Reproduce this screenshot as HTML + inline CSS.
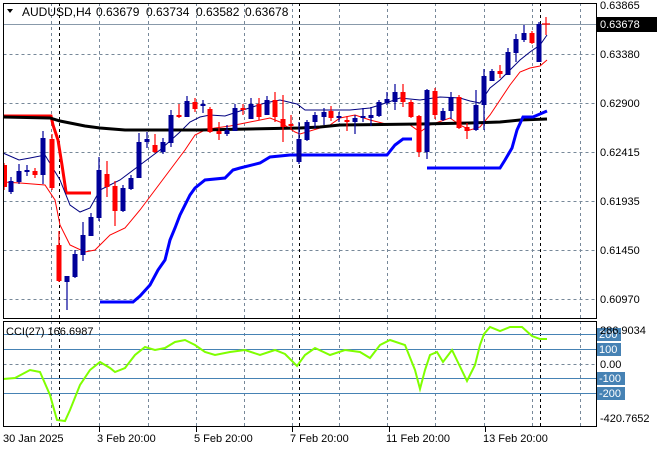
<!DOCTYPE html>
<html><head><meta charset="utf-8"><style>
html,body{margin:0;padding:0;background:#fff;}
svg{display:block;font-family:"Liberation Sans",sans-serif;font-size:11px;}
</style></head><body>
<svg width="660" height="450" viewBox="0 0 660 450" xmlns="http://www.w3.org/2000/svg">
<rect width="660" height="450" fill="#fff"/>
<g stroke="#778899" stroke-width="1" stroke-dasharray="3,3" fill="none">
<path d="M3.5 54.5H596M3.5 103.5H596M3.5 152.5H596M3.5 201.5H596M3.5 250.5H596M3.5 299.5H596"/>
<path d="M51.5 3V318M99.5 3V318M148.5 3V318M196.5 3V318M244.5 3V318M292.5 3V318M339.5 3V318M387.5 3V318M435.5 3V318M484.5 3V318M532.5 3V318M580.5 3V318"/>
<path d="M51.5 321V426M99.5 321V426M148.5 321V426M196.5 321V426M244.5 321V426M292.5 321V426M339.5 321V426M387.5 321V426M435.5 321V426M484.5 321V426M532.5 321V426M580.5 321V426"/>
<path d="M3.5 364.5H596"/>
</g>
<g stroke="#000" stroke-dasharray="3,3"><path d="M59.5 3V318M299.5 3V318M540.5 3V318M59.5 321V426M299.5 321V426M540.5 321V426"/></g>
<path d="M3 24.5H596" stroke="#8899aa"/>
<g stroke="#4682b4"><path d="M3 334.5H596M3 349.5H596M3 378.5H596M3 393.5H596"/></g>
<path d="M3 116H51L53 125L58 140L62 165L66 192L67 193H91" stroke="#f00" stroke-width="3" fill="none"/>
<path d="M3 182L20 183L45 185L55 200L60 225L70 245L85 252L95 250L110 235L125 228L140 210L155 190L170 170L185 150L195 135L205 130L215 128L230 126L250 122L270 118L280 122L295 132L300 134L330 125L340 118L355 115L370 120L390 125L410 125L420 132L430 125L450 118L460 125L470 130L480 127L490 115L500 100L510 85L520 72L530 68L540 66L547 60" stroke="#f00" stroke-width="1" fill="none"/>
<path d="M3 153L19 160L30 158L45 155L60 180L70 205L80 212L90 208L100 190L120 180L140 165L160 150L180 132L190 122L200 117L210 115L225 116L240 111L265 103L280 100L297 104L305 110L320 110L350 110L370 108L380 105L400 98L420 100L440 97L460 98L470 101L480 103L490 88L500 80L510 70L520 60L530 52L540 45L547 35" stroke="#000080" stroke-width="1" fill="none"/>
<path d="M3 117L50 118L60 121L70 123L85 126L100 128L125 130L200 130L300 128L320 127L340 125L420 124L470 123L500 122L520 120L547 119" stroke="#000" stroke-width="3" fill="none"/>
<path d="M100 302H133L140 296L150 285L158 270L165 260L170 240L175 228L180 215L190 195L195 188L205 180L225 178L233 170L240 168L260 163L270 157L290 155H387L395 145L403 139H412" stroke="#0000ff" stroke-width="3" fill="none"/>
<path d="M427 168H500L505 160L512 148L517 130L523 117H533L547 111" stroke="#0000ff" stroke-width="3" fill="none"/>
<g stroke-width="1.2">
<path stroke="#000099" d="M11 177V194M19 164V184M27 165V176M43 131V184M67 277V310M75 250V278M83 222V261M91 213V236M99 157V221M123 185V212M131 175V190M139 133V178M147 132V148M163 138V154M171 110V147M187 96V117M203 100V113M227 125V136M235 104V131M251 98V119M267 96V115M299 122V164M307 120V141M315 112V128M324 108V125M339 112V122M355 115V134M363 108V122M371 107V126M379 100V117M387 92V105M395 84V110M427 89V159M443 108V121M451 92V119M476 90V131M484 69V130M492 69V81M508 48V75M516 34V62M524 25V42M539 22V62"/>
<path stroke="#f00" d="M4 163V190M35 168V178M52 134V190M59 231V282M107 161V197M115 181V226M155 134V153M179 104V118M195 98V112M210 107V133M219 122V140M243 104V115M259 98V120M275 92V122M283 95V142M291 115V130M331 106V121M347 116V131M403 84V107M411 100V118M419 115V157M435 88V119M459 95V129M467 123V139M500 65V78M532 31V44M546 17V35M542 24H550"/>
<g fill="#000099">
<rect x="8.5" y="181" width="5" height="11"/><rect x="16.5" y="171" width="5" height="11"/><rect x="24.5" y="170" width="5" height="2"/><rect x="40.5" y="138" width="5" height="37"/><rect x="64.5" y="276" width="5" height="6"/><rect x="72.5" y="254" width="5" height="23"/><rect x="80.5" y="235" width="5" height="20"/><rect x="88.5" y="217" width="5" height="19"/><rect x="96.5" y="170" width="5" height="48"/><rect x="120.5" y="188" width="5" height="23"/><rect x="128.5" y="178" width="5" height="11"/><rect x="136.5" y="142" width="5" height="36"/><rect x="144.5" y="139" width="5" height="3"/><rect x="160.5" y="142" width="5" height="10"/><rect x="168.5" y="115" width="5" height="28"/><rect x="184.5" y="101" width="5" height="16"/><rect x="200.5" y="104" width="5" height="2"/><rect x="224.5" y="130" width="5" height="4"/><rect x="232.5" y="108" width="5" height="23"/><rect x="248.5" y="104" width="5" height="15"/><rect x="264.5" y="100" width="5" height="15"/><rect x="296.5" y="139" width="5" height="23"/><rect x="304.5" y="122" width="5" height="18"/><rect x="312.5" y="115" width="5" height="7"/><rect x="321.5" y="112" width="5" height="5"/><rect x="336.5" y="116" width="5" height="2"/><rect x="352.5" y="118" width="5" height="4"/><rect x="360.5" y="116" width="5" height="2"/><rect x="368.5" y="115" width="5" height="3"/><rect x="376.5" y="102" width="5" height="14"/><rect x="384.5" y="99" width="5" height="4"/><rect x="392.5" y="92" width="5" height="10"/><rect x="424.5" y="90" width="5" height="62"/><rect x="440.5" y="111" width="5" height="9"/><rect x="448.5" y="97" width="5" height="14"/><rect x="473.5" y="105" width="5" height="25"/><rect x="481.5" y="76" width="5" height="29"/><rect x="489.5" y="71" width="5" height="10"/><rect x="505.5" y="52" width="5" height="23"/><rect x="513.5" y="39" width="5" height="14"/><rect x="521.5" y="33" width="5" height="7"/><rect x="536.5" y="24" width="5" height="38"/>
</g>
<g fill="#f00">
<rect x="3" y="165" width="4" height="22"/><rect x="32.5" y="171" width="5" height="4"/><rect x="49.5" y="139" width="5" height="49"/><rect x="56.5" y="245" width="5" height="36"/><rect x="104.5" y="174" width="5" height="13"/><rect x="112.5" y="186" width="5" height="25"/><rect x="152.5" y="145" width="5" height="7"/><rect x="176.5" y="115" width="5" height="2"/><rect x="192.5" y="102" width="5" height="7"/><rect x="207.5" y="109" width="5" height="23"/><rect x="216.5" y="131" width="5" height="3"/><rect x="240.5" y="108" width="5" height="2"/><rect x="256.5" y="104" width="5" height="13"/><rect x="272.5" y="100" width="5" height="17"/><rect x="280.5" y="119" width="5" height="8"/><rect x="288.5" y="124" width="5" height="2"/><rect x="328.5" y="111" width="5" height="7"/><rect x="344.5" y="120" width="5" height="2"/><rect x="400.5" y="92" width="5" height="10"/><rect x="408.5" y="102" width="5" height="15"/><rect x="416.5" y="116" width="5" height="36"/><rect x="432.5" y="91" width="5" height="24"/><rect x="456.5" y="97" width="5" height="31"/><rect x="464.5" y="127" width="5" height="4"/><rect x="497.5" y="71" width="5" height="3"/><rect x="529.5" y="33" width="5" height="10"/>
</g>
</g>
<path d="M3 379L15 378L30 370L40 372L50 395L57 420L65 421L70 410L80 385L90 370L100 362L110 368L115 372L125 368L135 355L145 347L155 350L165 348L175 342L185 340L195 345L205 352L215 355L230 352L245 350L260 355L275 350L285 354L297 366L305 355L315 348L330 355L345 350L360 352L370 358L380 345L390 340L405 345L415 370L420 389L425 370L430 355L437 352L443 362L452 350L467 381L475 365L480 345L484 334L490 327L500 331L510 327L522 327L532 336L540 339L547 339" stroke="#7fff00" stroke-width="2" fill="none"/>
<rect x="3.5" y="3.5" width="593" height="315" fill="none" stroke="#000"/>
<rect x="3.5" y="321.5" width="593" height="105" fill="none" stroke="#000"/>
<path d="M99.5 427V432M196.5 427V432M292.5 427V432M389.5 427V432M485.5 427V432" stroke="#000"/>
<path d="M7 9H13L10 13Z" fill="#000"/>
<g fill="#000" font-size="12">
<text x="22" y="16">AUDUSD,H4</text>
<text x="96" y="16">0.63679</text>
<text x="146" y="16">0.63734</text>
<text x="196" y="16">0.63582</text>
<text x="245" y="16">0.63678</text>
</g>
<text x="6" y="335" fill="#000">CCI(27) 166.6987</text>
<g fill="#000">
<text x="600" y="9">0.63865</text>
<text x="600" y="58">0.63380</text>
<text x="600" y="107">0.62900</text>
<text x="600" y="156">0.62415</text>
<text x="600" y="205">0.61935</text>
<text x="600" y="254">0.61450</text>
<text x="600" y="303">0.60970</text>
</g>
<rect x="597" y="17" width="60" height="15" fill="#000"/>
<text x="600" y="28" fill="#fff">0.63678</text>
<g fill="#4682b4"><rect x="597" y="328" width="24" height="13"/><rect x="597" y="343" width="24" height="13"/><rect x="597" y="372" width="28" height="13"/><rect x="597" y="387" width="28" height="13"/></g>
<g fill="#fff"><text x="599" y="338">200</text><text x="599" y="353">100</text><text x="599" y="382">-100</text><text x="599" y="397">-200</text></g>
<g fill="#000"><text x="600" y="334">286.9034</text><text x="600" y="368">0.00</text><text x="600" y="422">-420.7652</text></g>
<g fill="#000">
<text x="3" y="442">30 Jan 2025</text>
<text x="97" y="442">3 Feb 20:00</text>
<text x="194" y="442">5 Feb 20:00</text>
<text x="290" y="442">7 Feb 20:00</text>
<text x="386" y="442">11 Feb 20:00</text>
<text x="483" y="442">13 Feb 20:00</text>
</g>
</svg>
</body></html>
